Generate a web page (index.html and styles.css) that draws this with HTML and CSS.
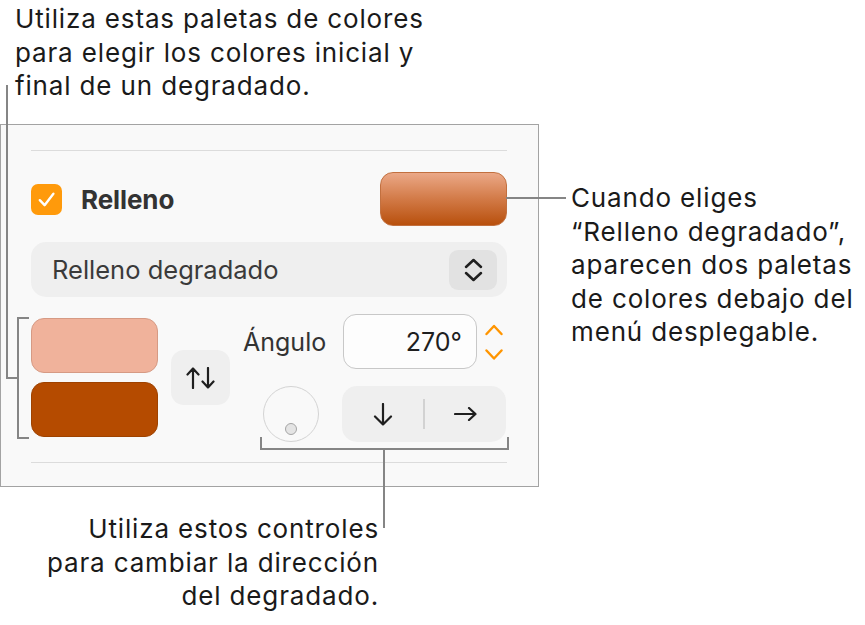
FILE: index.html
```html
<!DOCTYPE html>
<html lang="es">
<head>
<meta charset="utf-8">
<title>Relleno degradado</title>
<link rel="stylesheet" href="styles.css">
</head>
<body>
<div class="canvas">
  <p class="note note-top">Utiliza estas paletas de colores<br>para elegir los colores inicial y<br>final de un degradado.</p>
  <p class="note note-right">Cuando eliges<br>“Relleno degradado”,<br>aparecen dos paletas<br>de colores debajo del<br>menú desplegable.</p>
  <p class="note note-bottom">Utiliza estos controles<br>para cambiar la dirección<br>del degradado.</p>

  <section class="panel">
    <div class="sep"></div>
    <div class="fill-row">
      <span class="checkbox">
        <svg width="31" height="31" viewBox="0 0 31 31"><path d="M8.8 16.2 L13.6 21.2 L22.4 9.8" fill="none" stroke="#fff" stroke-width="2.4" stroke-linecap="round" stroke-linejoin="round"/></svg>
      </span>
      <span class="fill-label">Relleno</span>
      <span class="swatch"></span>
    </div>
    <div class="popup">
      <span class="popup-text">Relleno degradado</span>
      <span class="popup-btn">
        <svg width="48" height="40" viewBox="0 0 48 40"><path d="M17 17 L24.5 10 L32 17 M17 23 L24.5 30 L32 23" fill="none" stroke="#1f1f1f" stroke-width="2.5" stroke-linecap="round" stroke-linejoin="round"/></svg>
      </span>
    </div>
    <div class="grad-row">
      <div class="wells">
        <span class="well well-start"></span>
        <span class="well well-end"></span>
      </div>
      <span class="swap">
        <svg width="30" height="22" viewBox="0 0 30 22"><path d="M7 21 V1.5 M1.5 7.5 L7 1.5 L12.5 7.5 M22 1 V20.5 M16.5 14.5 L22 20.5 L27.5 14.5" fill="none" stroke="#1f1f1f" stroke-width="2.2" stroke-linecap="round" stroke-linejoin="round"/></svg>
      </span>
      <div class="angle-col">
        <div class="angle-row">
          <span class="angle-label">Ángulo</span>
          <span class="angle-field">270°</span>
          <span class="stepper">
            <svg width="18" height="40" viewBox="0 0 18 40"><path d="M1.5 12 L9 4 L16.5 12 M1.5 28.5 L9 36.5 L16.5 28.5" fill="none" stroke="#ff9500" stroke-width="2.4" stroke-linecap="round" stroke-linejoin="round"/></svg>
          </span>
        </div>
        <div class="dir-row">
          <span class="dial"><span class="dial-dot"></span></span>
          <div class="segmented">
            <span class="seg">
              <svg width="20" height="23" viewBox="0 0 20 23"><path d="M10 1 V21.5 M2 13.5 L10 21.5 L18 13.5" fill="none" stroke="#1f1f1f" stroke-width="2.2" stroke-linecap="round" stroke-linejoin="round"/></svg>
            </span>
            <span class="seg-divider"></span>
            <span class="seg">
              <svg width="23" height="14" viewBox="0 0 23 14"><path d="M1 7 H21.5 M15 1 L21.5 7 L15 13" fill="none" stroke="#1f1f1f" stroke-width="2.2" stroke-linecap="round" stroke-linejoin="round"/></svg>
            </span>
          </div>
        </div>
      </div>
    </div>
    <div class="sep sep-bottom"></div>
  </section>

  <svg class="leaders" width="865" height="625" viewBox="0 0 865 625">
    <path d="M7 85 V378 H18 M29 318 H18 V438 H29" />
    <path d="M506 198 H566" />
    <path d="M261 437 V449 H508 V437 M384 449 V528" />
  </svg>
</div>
</body>
</html>
```

FILE: styles.css
```css
* { box-sizing: border-box; }

html, body {
  margin: 0;
  padding: 0;
  background: #ffffff;
}

body {
  font-family: "Inter", "Noto Sans", "Liberation Sans", sans-serif;
  color: #1c1c1c;
}

.canvas {
  position: relative;
  width: 865px;
  height: 625px;
  padding-top: 124px;
  overflow: hidden;
}

/* callout texts (annotations on the canvas) */
.note {
  position: absolute;
  margin: 0;
  font-size: 26px;
  line-height: 33.5px;
  color: #1a1a1a;
  white-space: nowrap;
  letter-spacing: 0.85px;
}
.note-top { left: 15px; top: 2px; }
.note-right { left: 571px; top: 181px; }
.note-bottom { right: 486px; top: 512px; text-align: right; }

.leaders {
  position: absolute;
  left: 0;
  top: 0;
  pointer-events: none;
}
.leaders path {
  fill: none;
  stroke: #858585;
  stroke-width: 2;
}

/* panel */
.panel {
  width: 539px;
  height: 363px;
  background: #f9f9f9;
  border: 1px solid #a3a3a3;
  padding: 25px 31px 0 30px;
  display: flex;
  flex-direction: column;
}

.sep {
  height: 1px;
  background: #dcdcdc;
  flex: none;
}
.sep-bottom { margin-top: 20px; }

.fill-row {
  margin-top: 21px;
  height: 54px;
  display: flex;
  align-items: center;
}

.checkbox {
  width: 31px;
  height: 31px;
  border-radius: 7px;
  background: #ff9a0b;
  display: flex;
  flex: none;
}

.fill-label {
  margin-left: 19px;
  font-size: 26px;
  font-weight: 700;
  color: #333333;
  letter-spacing: -0.1px;
}

.swatch {
  margin-left: auto;
  width: 127px;
  height: 54px;
  border-radius: 13px;
  background: linear-gradient(to bottom, #eba887 0%, #d27a47 50%, #b8500d 100%);
  border: 1px solid #c2703f;
}

.popup {
  margin-top: 16px;
  height: 55px;
  border-radius: 15px;
  background: #efefef;
  display: flex;
  align-items: center;
  padding: 0 10px 0 21px;
}

.popup-text {
  font-size: 25.5px;
  color: #3a3a3a;
}

.popup-btn {
  margin-left: auto;
  width: 48px;
  height: 40px;
  border-radius: 9px;
  background: #e2e2e2;
  display: flex;
}

.grad-row {
  margin-top: 17px;
  display: flex;
  align-items: flex-start;
}

.wells {
  width: 127px;
  padding-top: 4px;
  display: flex;
  flex-direction: column;
  gap: 9px;
}

.well {
  height: 55px;
  border-radius: 13px;
}
.well-start {
  background: #f0b29b;
  border: 1px solid #d69a84;
}
.well-end {
  background: #b54b00;
  border: 1px solid #9e4200;
}

.swap {
  margin: 36px 0 0 13px;
  width: 59px;
  height: 55px;
  border-radius: 13px;
  background: #efefef;
  display: flex;
  align-items: center;
  justify-content: center;
}

.angle-col {
  margin-left: 13px;
  display: flex;
  flex-direction: column;
  gap: 17px;
}

.angle-row {
  height: 55px;
  display: flex;
  align-items: center;
}

.angle-label {
  width: 100px;
  font-size: 25px;
  color: #333333;
}

.angle-field {
  width: 134px;
  height: 55px;
  border: 1.5px solid #c8c8c8;
  border-radius: 13px;
  background: #fdfdfd;
  display: flex;
  align-items: center;
  justify-content: flex-end;
  padding-right: 14px;
  font-size: 25px;
  color: #1f1f1f;
}

.stepper {
  margin-left: 8px;
  display: flex;
}

.dir-row {
  display: flex;
  align-items: center;
  height: 56px;
}

.dial {
  margin-left: 20px;
  width: 56px;
  height: 56px;
  border-radius: 50%;
  border: 1.5px solid #d4d4d4;
  display: flex;
  align-items: flex-end;
  justify-content: center;
  padding-bottom: 6px;
}

.dial-dot {
  width: 12px;
  height: 12px;
  border-radius: 50%;
  border: 1.5px solid #a5a5a5;
  background: #e4e4e4;
}

.segmented {
  margin-left: 23px;
  width: 164px;
  height: 56px;
  border-radius: 15px;
  background: #efefef;
  display: flex;
  align-items: center;
}

.seg {
  flex: 1;
  display: flex;
  justify-content: center;
  align-items: center;
}

.seg-divider {
  width: 2px;
  height: 30px;
  background: #d2d2d2;
}
```
